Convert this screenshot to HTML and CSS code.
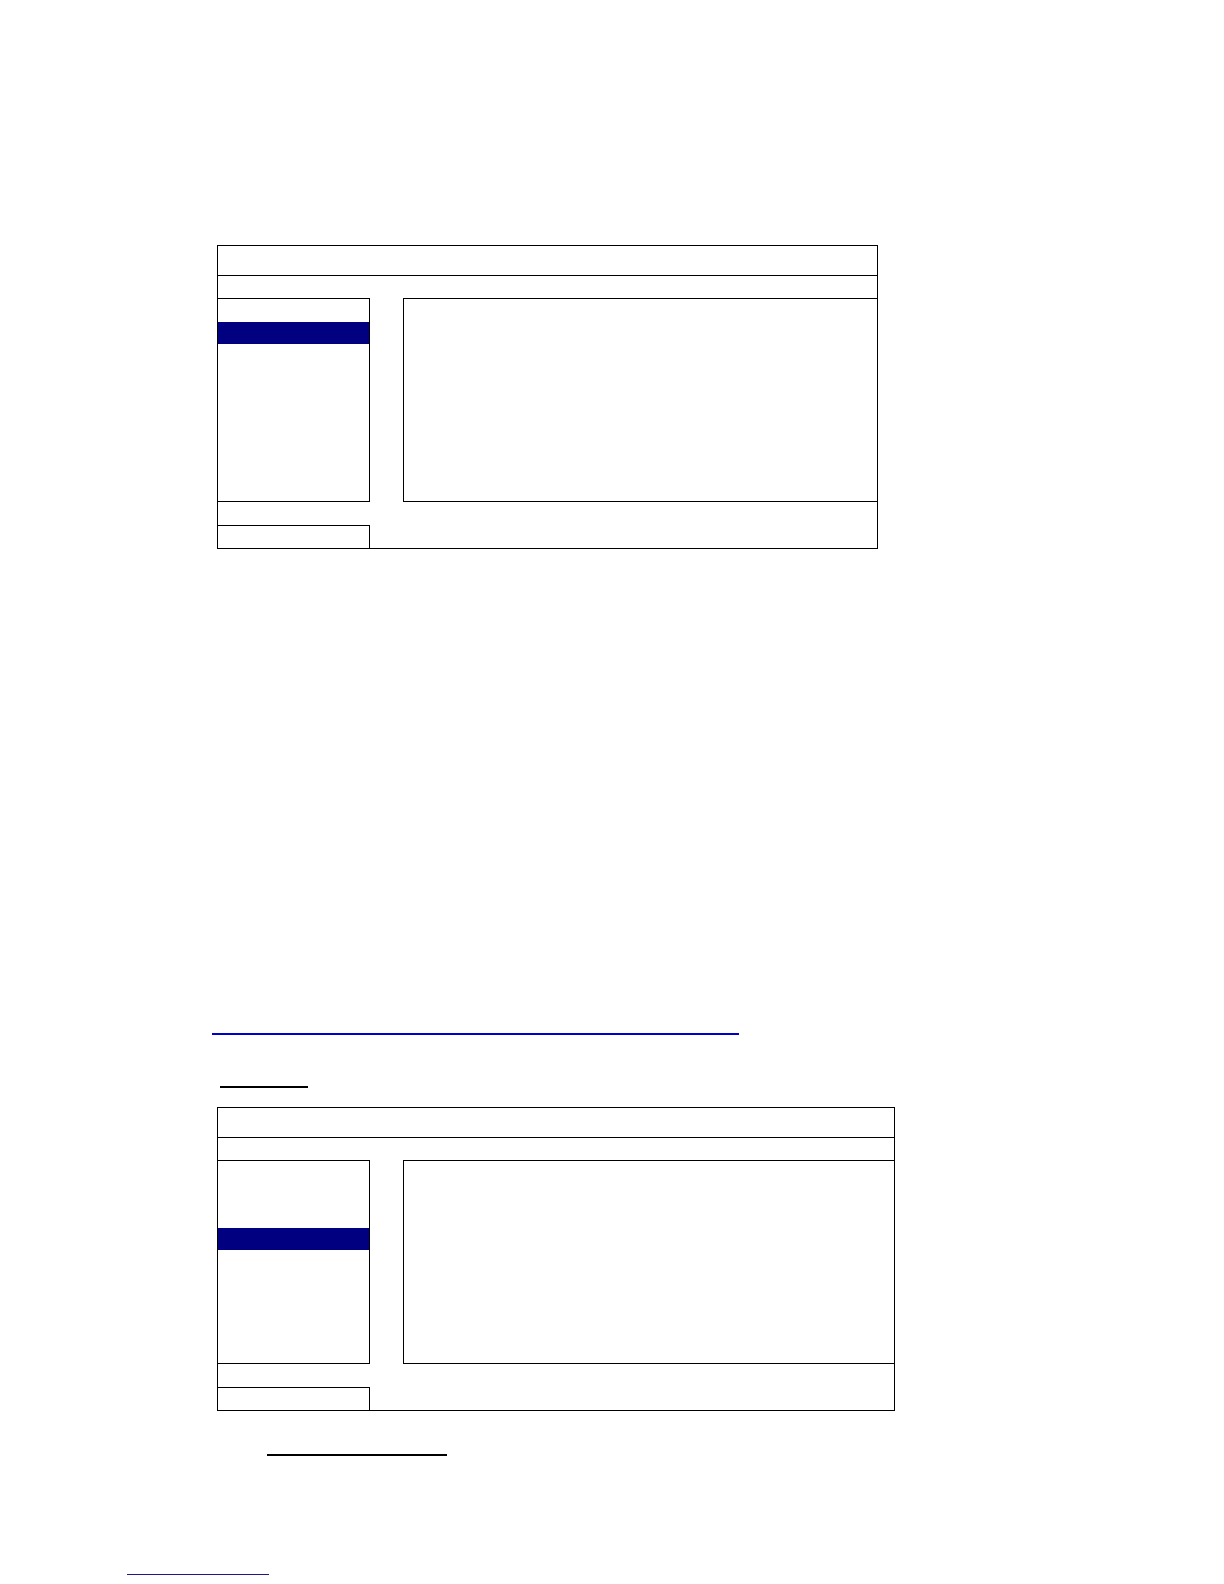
FILE: index.html
```html
<!DOCTYPE html>
<html lang="en">
<head>
<meta charset="utf-8">
<title>Menu diagrams</title>
<link rel="stylesheet" href="styles.css">
</head>
<body>
<main class="page">
  <section class="dlg dlg-a">
    <div class="dlg-title"></div>
    <div class="dlg-gap"></div>
    <div class="dlg-body">
      <ul class="dlg-list">
        <li class="row"></li>
        <li class="row sel"></li>
        <li class="row"></li>
        <li class="row"></li>
        <li class="row"></li>
        <li class="row"></li>
        <li class="row"></li>
        <li class="row"></li>
      </ul>
      <div class="dlg-content"></div>
    </div>
    <div class="dlg-foot">
      <div class="dlg-btn"></div>
    </div>
  </section>

  <a class="link-rule" href="#"></a>
  <span class="rule rule-a"></span>

  <section class="dlg dlg-b">
    <div class="dlg-title"></div>
    <div class="dlg-gap"></div>
    <div class="dlg-body">
      <ul class="dlg-list">
        <li class="row"></li>
        <li class="row"></li>
        <li class="row"></li>
        <li class="row sel"></li>
        <li class="row"></li>
        <li class="row"></li>
        <li class="row"></li>
        <li class="row"></li>
      </ul>
      <div class="dlg-content"></div>
    </div>
    <div class="dlg-foot">
      <div class="dlg-btn"></div>
    </div>
  </section>

  <span class="rule rule-b"></span>
  <a class="foot-rule" href="#"></a>
</main>
</body>
</html>
```

FILE: styles.css
```css
* { box-sizing: border-box; }
html, body {
  margin: 0;
  padding: 0;
  background: #ffffff;
  font-family: "Liberation Sans", Arial, sans-serif;
}
.page {
  width: 1224px;
  min-height: 1584px;
  display: flex;
  flex-direction: column;
  align-items: flex-start;
  padding-top: 245px;
}

/* dialog wireframe */
.dlg {
  margin-left: 217px;
  border: 1px solid #000;
  display: flex;
  flex-direction: column;
}
.dlg-a { width: 661px; }
.dlg-b { width: 678px; }
.dlg-title {
  height: 30px;
  border-bottom: 1px solid #000;
}
.dlg-gap { height: 22px; }
.dlg-body {
  display: flex;
  height: 204px;
  gap: 33px;
}
.dlg-list {
  list-style: none;
  margin: 0;
  padding: 0;
  width: 152px;
  border-top: 1px solid #000;
  border-right: 1px solid #000;
  border-bottom: 1px solid #000;
}
.row { height: 22px; }
.row:first-child { height: 23px; }
.row.sel { background: #000080; }
.dlg-content {
  flex: 1;
  border-top: 1px solid #000;
  border-left: 1px solid #000;
  border-bottom: 1px solid #000;
}
.dlg-foot {
  padding-top: 23px;
}
.dlg-btn {
  width: 152px;
  height: 23px;
  border-top: 1px solid #000;
  border-right: 1px solid #000;
}

/* rules / underlines */
.link-rule {
  display: block;
  margin-top: 484px;
  margin-left: 212px;
  width: 527px;
  height: 2px;
  background: #0000cc;
}
.rule {
  display: block;
  height: 2px;
  background: #000;
}
.rule-a {
  margin-top: 51px;
  margin-left: 220px;
  width: 88px;
}
.dlg-b { margin-top: 19px; }
.rule-b {
  margin-top: 43px;
  margin-left: 267px;
  width: 180px;
}
.foot-rule {
  display: block;
  margin-top: 118px;
  margin-left: 127px;
  width: 142px;
  height: 1px;
  background: #1a1a80;
}
```
